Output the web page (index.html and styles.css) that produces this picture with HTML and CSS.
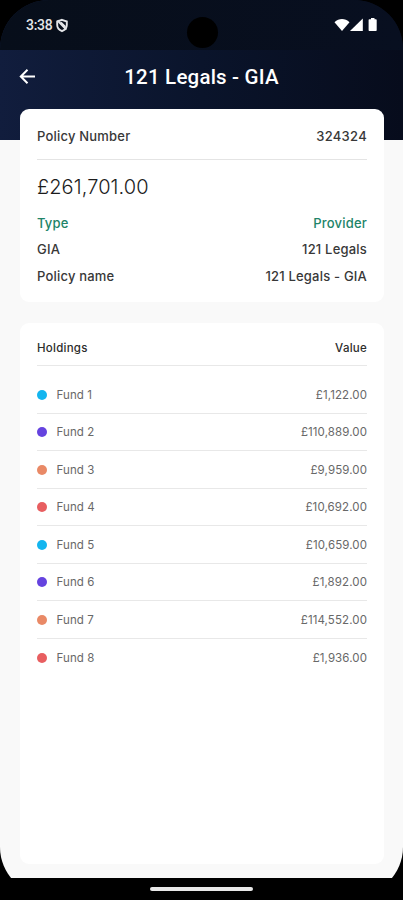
FILE: index.html
```html
<!DOCTYPE html>
<html lang="en">

<head>
  <meta charset="UTF-8">
  <meta name="viewport" content="width=device-width, initial-scale=1.0">
  <title>121 Legals - GIA</title>
  <link rel="stylesheet" href="styles.css">
</head>

<body>
  <div class="phone">
    <div class="status-bar">
      <div class="status-left">
        <span class="time">3:38</span>
        <svg class="shield" width="14" height="15" viewBox="0 0 14 15" fill="none" stroke="#e4e5e8" stroke-width="1.9">
          <path d="M7 1.800 11.800 3.500V7c0 3-2 5-4.800 6.200C4.200 12 2.200 10 2.200 7V3.500z" />
          <path d="M2.500 2.500 11.300 11.600M5.800 4.500 10.400 9" />
        </svg>
      </div>
      <span class="camera"></span>
      <svg class="status-icons" width="44" height="16" viewBox="0 0 44 16" fill="#fff">
        <path d="M.5 5.200C5 1 11 1 15.500 5.200L8 14z" />
        <path d="M28.800 1.500V14H16z" />
        <path d="M37 1h3.500v1.300h1.400q.8 0 .8.800V13.200q0 .8-.8.800h-6.500q-.8 0-.8-.8V3.100q0-.8.8-.8H37z" />
      </svg>
    </div>

    <header>
      <svg class="back" width="18" height="16" viewBox="0 0 18 16" fill="none" stroke="#fff" stroke-width="2">
        <path d="M16 7.500H2M8.500 .8 1.800 7.500l6.700 6.700" />
      </svg>
      <h1>121 Legals - GIA</h1>
    </header>

    <main>
      <section class="card policy">
        <div class="row number">
          <span>Policy Number</span>
          <span class="digits">324324</span>
        </div>
        <p class="amount">£261,701.00</p>
        <div class="row green"><span>Type</span><span>Provider</span></div>
        <div class="row"><span>GIA</span><span>121 Legals</span></div>
        <div class="row"><span>Policy name</span><span>121 Legals - GIA</span></div>
      </section>

      <section class="card holdings">
        <div class="holdings-head"><span>Holdings</span><span>Value</span></div>
        <ul>
          <li><i class="dot blue"></i><span>Fund 1</span><span class="value">£1,122.00</span></li>
          <li><i class="dot purple"></i><span>Fund 2</span><span class="value">£110,889.00</span></li>
          <li><i class="dot orange"></i><span>Fund 3</span><span class="value">£9,959.00</span></li>
          <li><i class="dot red"></i><span>Fund 4</span><span class="value">£10,692.00</span></li>
          <li><i class="dot blue"></i><span>Fund 5</span><span class="value">£10,659.00</span></li>
          <li><i class="dot purple"></i><span>Fund 6</span><span class="value">£1,892.00</span></li>
          <li><i class="dot orange"></i><span>Fund 7</span><span class="value">£114,552.00</span></li>
          <li><i class="dot red"></i><span>Fund 8</span><span class="value">£1,936.00</span></li>
        </ul>
      </section>
    </main>
  </div>

  <div class="nav-bar"><span class="handle"></span></div>
</body>

</html>
```
FILE: styles.css
```css
* {
  box-sizing: border-box;
}

body {
  background: #000;
  font-family: Inter, "Liberation Sans", sans-serif;
  margin: 0;
  height: 900px;
  overflow: hidden;
}

.phone {
  display: flex;
  flex-direction: column;
  height: 896px;
  border-radius: 49px;
  overflow: hidden;
  background: linear-gradient(to right, #111d3d, #0a142b 50%, #070c1c) top / 100% 140px no-repeat #f9f9f9;
}

.status-bar {
  display: grid;
  grid-template-columns: 1fr 31px 1fr;
  align-items: center;
  height: 50px;
  padding: 0 25px 0 26px;
  background: linear-gradient(to right, #070e1a, #080f20);
}

.status-left {
  display: flex;
  align-items: center;
  gap: 3px;
}

.time {
  font-family: Roboto, sans-serif;
  font-size: 14px;
  font-weight: 500;
  letter-spacing: -0.3px;
  color: #e4e5e8;
}

.camera {
  width: 31px;
  height: 31px;
  margin-top: 15px;
  border-radius: 50%;
  background: #000;
}

.status-icons {
  justify-self: end;
}

header {
  display: grid;
  grid-template-columns: 18px 1fr 18px;
  align-items: center;
  height: 53px;
  padding: 0 19px;
}

h1 {
  margin: 0;
  font-family: Roboto, sans-serif;
  font-size: 20.500px;
  font-weight: 500;
  letter-spacing: 0.2px;
  text-align: center;
  color: #fff;
}

main {
  padding: 6px 19px 0 20px;
}

.card {
  padding: 0 17px;
  border-radius: 9px;
  background: #fff;
}

.policy {
  height: 193px;
  margin-bottom: 21px;
  font-size: 13px;
  font-weight: 500;
  letter-spacing: 0.2px;
  color: #383838;
}

.row {
  display: flex;
  justify-content: space-between;
  align-items: center;
  height: 26.300px;
}

.number {
  height: 51px;
  padding-top: 3px;
  border-bottom: 1px solid #e4e4e4;
}

.digits {
  letter-spacing: 0.3px;
}

.amount {
  height: 50px;
  margin: 0;
  line-height: 54px;
  font-size: 20px;
  font-weight: 300;
  letter-spacing: 0.1px;
  color: #1c1c1c;
}

.green {
  color: #218468;
}

.holdings {
  height: 541px;
}

.holdings-head {
  display: flex;
  justify-content: space-between;
  align-items: center;
  height: 43px;
  padding-top: 8px;
  border-bottom: 1px solid #e8e8e8;
  font-size: 11.500px;
  font-weight: 500;
  letter-spacing: 0.25px;
  color: #2c2c2c;
}

ul {
  list-style-type: none;
  margin: 0;
  padding: 10px 0 0;
}

li {
  display: flex;
  align-items: center;
  height: 37.500px;
  padding-top: 1px;
  border-bottom: 1px solid #e8e8e8;
  font-size: 11.500px;
  letter-spacing: 0.1px;
  color: #686868;
}

li:last-child {
  border-bottom: none;
}

.dot {
  width: 10px;
  height: 10px;
  margin-right: 9.500px;
  border-radius: 50%;
}

.value {
  margin-left: auto;
}

.blue {
  background: #13b5ef;
}

.purple {
  background: #6543df;
}

.orange {
  background: #e98966;
}

.red {
  background: #e85e60;
}

/* covers the rounded bottom of the screen */
.nav-bar {
  position: absolute;
  top: 878px;
  left: 0;
  width: 403px;
  height: 22px;
  display: flex;
  justify-content: center;
  padding-top: 9px;
  background: #000;
}

.handle {
  width: 103px;
  height: 4px;
  border-radius: 2px;
  background: #e8e8e8;
}
```
